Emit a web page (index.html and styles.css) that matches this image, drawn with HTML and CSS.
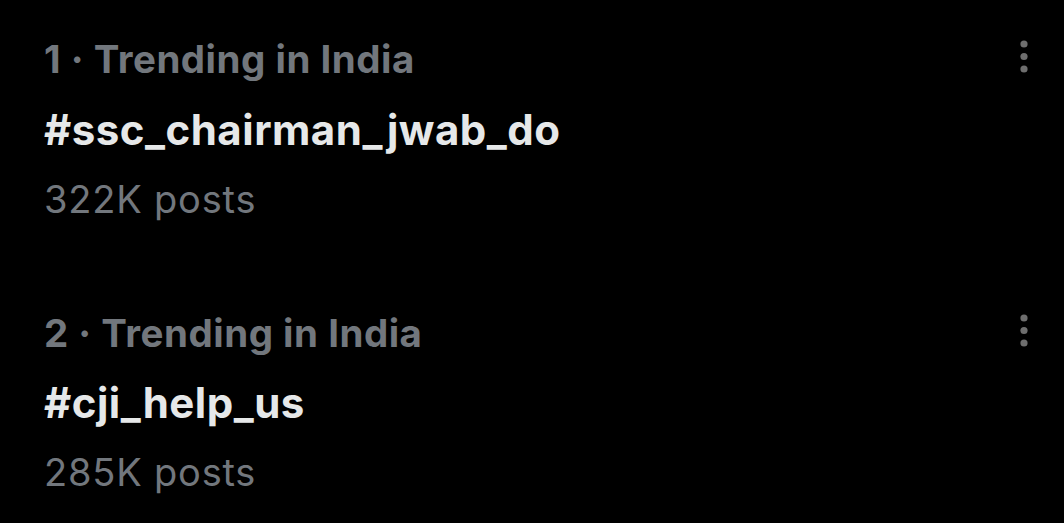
FILE: index.html
```html
<!DOCTYPE html>
<html lang="en">
<head>
    <meta charset="UTF-8">
    <meta name="viewport" content="width=device-width, initial-scale=1.0">
    <title>Trending</title>
    <link rel="stylesheet" href="styles.css">
</head>
<body>
    <div class="trends">
        <div class="trend">
            <div class="trend-info">
                <div class="trend-meta">1 · Trending in India</div>
                <div class="trend-tag">#ssc_chairman_jwab_do</div>
                <div class="trend-count">322K posts</div>
            </div>
            <svg class="more" viewBox="0 0 10 36" width="10" height="36">
                <circle cx="5" cy="5" r="3.6"></circle>
                <circle cx="5" cy="17.5" r="3.6"></circle>
                <circle cx="5" cy="30" r="3.6"></circle>
            </svg>
        </div>
        <div class="trend">
            <div class="trend-info">
                <div class="trend-meta">2 · Trending in India</div>
                <div class="trend-tag">#cji_help_us</div>
                <div class="trend-count">285K posts</div>
            </div>
            <svg class="more" viewBox="0 0 10 36" width="10" height="36">
                <circle cx="5" cy="5" r="3.6"></circle>
                <circle cx="5" cy="17.5" r="3.6"></circle>
                <circle cx="5" cy="30" r="3.6"></circle>
            </svg>
        </div>
    </div>
</body>
</html>
```

FILE: styles.css
```css
body {
    margin: 0;
    background-color: #000;
    font-family: Inter, "Noto Sans", sans-serif;
}
.trends {
    display: flex;
    flex-direction: column;
}
.trend {
    display: flex;
    justify-content: space-between;
    align-items: flex-start;
    padding: 35px 35px 51px 44px;
}
.trend-info {
    display: flex;
    flex-direction: column;
}
.trend-meta {
    color: #72777d;
    font-size: 38.5px;
    font-weight: bold;
    line-height: 48px;
    letter-spacing: 0.5px;
}
.trend-tag {
    color: #e6e8e9;
    font-size: 42px;
    font-weight: bold;
    line-height: 56px;
    letter-spacing: 0.5px;
    margin-top: 18.7px;
}
.trend-count {
    color: #72777d;
    font-size: 38px;
    line-height: 48px;
    letter-spacing: 0.8px;
    margin-top: 17px;
}
.more {
    margin-top: 4px;
    fill: #6e6e6e;
}
```
